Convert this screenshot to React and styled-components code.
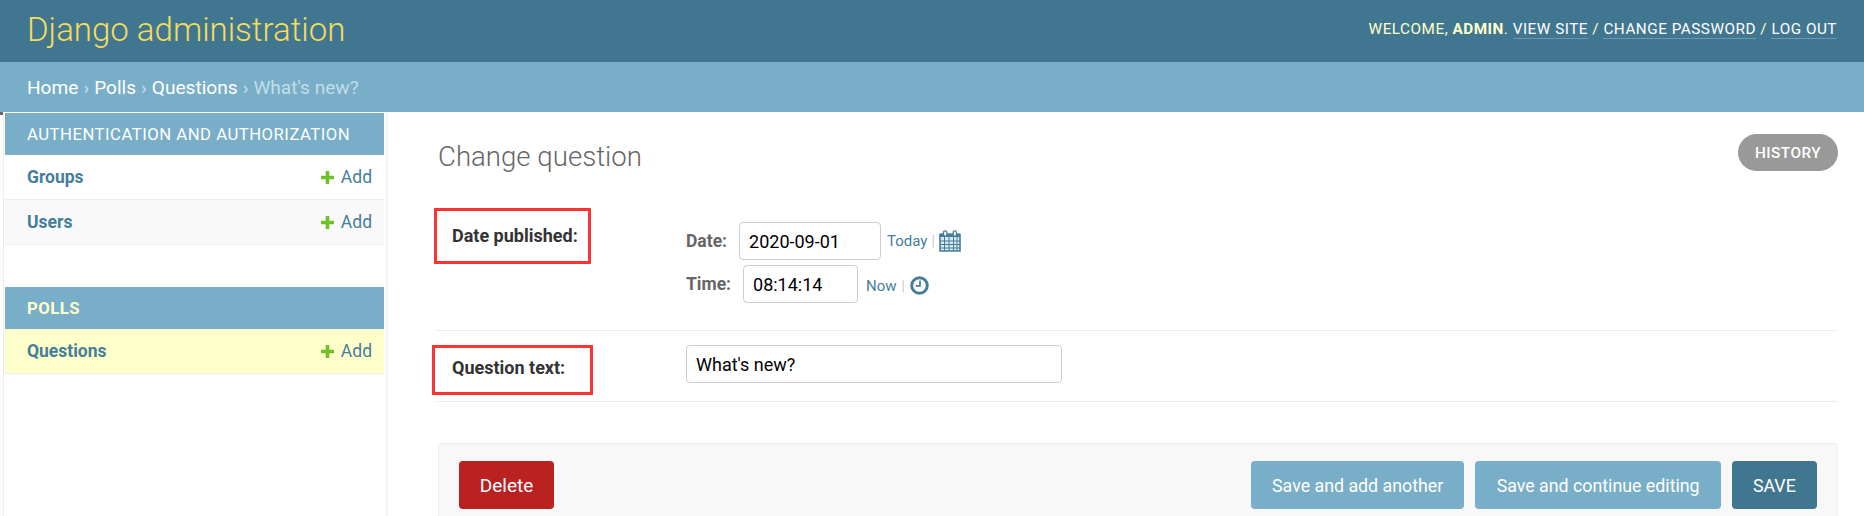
import styled, { createGlobalStyle } from 'styled-components';
import { useState } from 'react';

const GlobalStyle = createGlobalStyle`
  html, body {
    margin: 0;
    padding: 0;
    background: #fff;
    overflow: hidden;
  }
  body {
    font-family: Roboto, "Liberation Sans", sans-serif;
    color: #333;
  }
  * {
    box-sizing: border-box;
  }
`;

const PlusIcon = () => (
  <svg width="15" height="15" viewBox="0 0 15 15">
    <path d="M5.7 1h3.6v4.7H14v3.6H9.3V14H5.7V9.3H1V5.7h4.7z" fill="#70bf2b" />
  </svg>
);

const CalendarIcon = () => (
  <svg width="22" height="22" viewBox="0 0 22 22">
    <path
      d="M1 4.5h20V21H1z"
      fill="#dce8ef"
      stroke="#447e9b"
      strokeWidth="1.6"
    />
    <path d="M1 3.5h20v3.5H1z" fill="#447e9b" />
    <path
      d="M1 11h20M1 14.5h20M1 18h20M5.5 7v14M10 7v14M14.5 7v14M18 7v14"
      stroke="#447e9b"
      strokeWidth="1"
      fill="none"
    />
    <rect x="4.5" y="0.8" width="3.4" height="5.4" rx="1.7" fill="#fff" stroke="#447e9b" strokeWidth="1.3" />
    <rect x="14.1" y="0.8" width="3.4" height="5.4" rx="1.7" fill="#fff" stroke="#447e9b" strokeWidth="1.3" />
  </svg>
);

const ClockIcon = () => (
  <svg width="19" height="19" viewBox="0 0 19 19">
    <circle cx="9.5" cy="9.5" r="7.8" fill="#fff" stroke="#447e9b" strokeWidth="3" />
    <path d="M10 4.5v5.4H5.8" fill="none" stroke="#447e9b" strokeWidth="1.7" />
  </svg>
);

const NAV = [
  {
    title: 'Authentication and Authorization',
    models: ['Groups', 'Users'],
  },
  {
    title: 'Polls',
    current: true,
    models: ['Questions'],
  },
];

const App = () => {
  const [date, setDate] = useState('2020-09-01');
  const [time, setTime] = useState('08:14:14');
  const [question, setQuestion] = useState("What's new?");

  return (
    <>
      <GlobalStyle />
      <Header>
        <Branding>Django administration</Branding>
        <UserTools>
          Welcome, <strong>admin</strong>. <ToolLink>View site</ToolLink> / <ToolLink>Change password</ToolLink> /{' '}
          <ToolLink>Log out</ToolLink>
        </UserTools>
      </Header>
      <Breadcrumbs>
        <a>Home</a> <Sep>›</Sep> <a>Polls</a> <Sep>›</Sep> <a>Questions</a> <Sep>›</Sep> What's new?
      </Breadcrumbs>
      <Body>
        <Sidebar>
          {NAV.map((app) => (
            <AppModule key={app.title}>
              <Caption $current={app.current}>{app.title}</Caption>
              {app.models.map((model, ind) => (
                <ModelRow key={model} $current={app.current} $alt={ind % 2 === 1}>
                  <ModelLink>{model}</ModelLink>
                  <AddLink>
                    <PlusIcon />
                    Add
                  </AddLink>
                </ModelRow>
              ))}
            </AppModule>
          ))}
        </Sidebar>
        <Main>
          <TitleBar>
            <Title>Change question</Title>
            <HistoryLink>History</HistoryLink>
          </TitleBar>
          <FormRow $top={13} $bottom={27}>
            <FieldLabel $offset={3}>Date published:</FieldLabel>
            <DateTime>
              <DateTimeLine>
                <SubLabel>Date:</SubLabel>
                <TextInput $width={142} value={date} onChange={(e) => setDate(e.target.value)} />
                <Shortcuts $left={6} $gap={4}>
                  Today <Bar>|</Bar>
                  <CalendarIcon />
                </Shortcuts>
              </DateTimeLine>
              <DateTimeLine>
                <SubLabel>Time:</SubLabel>
                <TextInput $width={115} value={time} onChange={(e) => setTime(e.target.value)} />
                <Shortcuts $left={8} $gap={5} $drop={3}>
                  Now <Bar>|</Bar>
                  <ClockIcon />
                </Shortcuts>
              </DateTimeLine>
            </DateTime>
          </FormRow>
          <FormRow $top={14} $bottom={18}>
            <FieldLabel $offset={12}>Question text:</FieldLabel>
            <TextInput $width={376} value={question} onChange={(e) => setQuestion(e.target.value)} />
          </FormRow>
          <SubmitRow>
            <DeleteLink>Delete</DeleteLink>
            <SubmitGroup>
              <SubmitButton>Save and add another</SubmitButton>
              <SubmitButton>Save and continue editing</SubmitButton>
              <SubmitButton $default>SAVE</SubmitButton>
            </SubmitGroup>
          </SubmitRow>
          <Highlight $top={96} $left={-2} $width={157} $height={56} />
          <Highlight $top={233} $left={-4} $width={161} $height={50} />
        </Main>
      </Body>
    </>
  );
};

export default App;

const Header = styled.div`
  height: 62px;
  background: #417690;
  display: flex;
  align-items: center;
  justify-content: space-between;
  padding: 0 27px 4px;
`;

const Branding = styled.h1`
  margin: 0;
  font-size: 33px;
  font-weight: 300;
  color: #f5dd5d;
`;

const UserTools = styled.div`
  font-size: 15.3px;
  font-weight: 400;
  letter-spacing: 0.5px;
  text-transform: uppercase;
  color: #ffc;
  strong {
    font-weight: 700;
  }
`;

const ToolLink = styled.a`
  color: #fff;
  border-bottom: 1px solid rgba(255, 255, 255, 0.25);
`;

const Breadcrumbs = styled.div`
  height: 50px;
  background: #79aec8;
  display: flex;
  align-items: center;
  gap: 5px;
  padding-left: 27px;
  font-size: 19.1px;
  color: #c4dce8;
  a {
    color: #fff;
  }
`;

const Sep = styled.span`
  color: #c4dce8;
`;

const Body = styled.div`
  display: flex;
  align-items: stretch;
  height: 404px;
`;

const Sidebar = styled.div`
  position: relative;
  width: 385px;
  flex: none;
  margin-left: 3px;
  padding: 1px 2px 0 1px;
  border-left: 1px solid #eee;
  border-right: 2px solid #f4f4f4;
  display: flex;
  flex-direction: column;
  gap: 42px;
  &::before {
    content: '';
    position: absolute;
    top: 0;
    left: -4px;
    width: 3px;
    height: 3px;
    background: #666;
  }
`;

const AppModule = styled.div`
  display: flex;
  flex-direction: column;
`;

const Caption = styled.div`
  height: 42px;
  background: #79aec8;
  display: flex;
  align-items: center;
  padding-left: 22px;
  font-size: 16.7px;
  font-weight: ${(props) => (props.$current ? 700 : 400)};
  letter-spacing: 0.5px;
  text-transform: uppercase;
  color: ${(props) => (props.$current ? '#ffc' : '#fff')};
`;

const ModelRow = styled.div`
  height: 45px;
  display: flex;
  align-items: center;
  justify-content: space-between;
  padding: 0 12px 0 22px;
  font-size: 17.5px;
  border-bottom: 1px solid #eee;
  background: ${(props) => (props.$current ? '#ffc' : props.$alt ? '#f9f9f9' : '#fff')};
`;

const ModelLink = styled.a`
  color: #447e9b;
  font-weight: 700;
`;

const AddLink = styled.a`
  color: #447e9b;
  display: flex;
  align-items: center;
  gap: 6px;
`;

const Main = styled.div`
  flex: 1;
  position: relative;
  margin-left: 48px;
  margin-right: 26px;
`;

const TitleBar = styled.div`
  height: 97px;
  display: flex;
  align-items: flex-start;
  justify-content: space-between;
`;

const Title = styled.h1`
  margin: 28px 0 0 2px;
  font-size: 27.6px;
  font-weight: 300;
  color: #666;
`;

const HistoryLink = styled.a`
  margin-top: 22px;
  width: 100px;
  height: 37px;
  border-radius: 19px;
  background: #999;
  color: #fff;
  font-size: 15.3px;
  font-weight: 500;
  letter-spacing: 0.5px;
  text-transform: uppercase;
  display: flex;
  align-items: center;
  justify-content: center;
`;

const FormRow = styled.div`
  display: flex;
  align-items: flex-start;
  padding: ${(props) => `${props.$top}px 0 ${props.$bottom}px`};
  border-bottom: 1px solid #eee;
`;

const FieldLabel = styled.label`
  width: 250px;
  flex: none;
  padding: ${(props) => props.$offset}px 0 0 16px;
  font-size: 18px;
  font-weight: 700;
  color: #333;
`;

const DateTime = styled.div`
  display: flex;
  flex-direction: column;
  gap: 5px;
`;

const DateTimeLine = styled.div`
  display: flex;
  align-items: center;
`;

const SubLabel = styled.span`
  margin-right: 12px;
  font-size: 17.5px;
  font-weight: 700;
  color: #666;
`;

const TextInput = styled.input`
  width: ${(props) => props.$width}px;
  height: 38px;
  padding: 0 9px;
  border: 1px solid #ccc;
  border-radius: 4px;
  font: 400 18px Roboto, sans-serif;
  color: #000;
  outline: none;
`;

const Shortcuts = styled.span`
  margin-left: ${(props) => props.$left}px;
  margin-top: ${(props) => props.$drop || 0}px;
  display: flex;
  align-items: center;
  gap: ${(props) => props.$gap}px;
  font-size: 15px;
  color: #447e9b;
`;

const Bar = styled.span`
  color: #ccc;
  font-size: 14px;
`;

const SubmitRow = styled.div`
  margin-top: 41px;
  margin-left: 2px;
  padding: 17px 20px 20px;
  background: #f8f8f8;
  border: 1px solid #eee;
  border-radius: 4px;
  display: flex;
  justify-content: space-between;
`;

const DeleteLink = styled.a`
  width: 95px;
  height: 48px;
  border-radius: 4px;
  background: #ba2121;
  color: #fff;
  font-size: 19px;
  display: flex;
  align-items: center;
  justify-content: center;
`;

const SubmitGroup = styled.div`
  display: flex;
  gap: 11px;
`;

const SubmitButton = styled.button`
  height: 48px;
  padding: 0 21.2px;
  border: none;
  border-radius: 4px;
  background: ${(props) => (props.$default ? '#417690' : '#79aec8')};
  color: #fff;
  font: 400 17.8px Roboto, sans-serif;
`;

const Highlight = styled.div`
  position: absolute;
  top: ${(props) => props.$top}px;
  left: ${(props) => props.$left}px;
  width: ${(props) => props.$width}px;
  height: ${(props) => props.$height}px;
  border: 3px solid #f33;
  pointer-events: none;
`;
